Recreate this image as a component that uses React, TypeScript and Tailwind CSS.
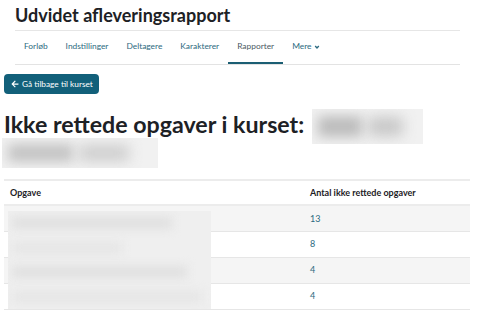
import React from 'react';

const navItems = ['Forløb', 'Indstillinger', 'Deltagere', 'Karakterer', 'Rapporter', 'Mere'];

const rows = [13, 8, 4, 4];

// blurred placeholder for the hidden course name
const Blur: React.FC<{ className: string; tone?: string }> = ({ className, tone = 'bg-[#bdbdbd]' }) => (
  <span className={`inline-flex items-center gap-[6px] overflow-hidden align-top px-[6px] bg-[#f1f1f1] ${className}`}>
    <span className={`h-[60%] w-[45%] ${tone} blur-[6px]`} />
    <span className={`h-[55%] w-[35%] ${tone} blur-[7px] opacity-80`} />
  </span>
);

const App: React.FC = () => {
  return (
    <div className="w-[480px] h-[328px] overflow-hidden bg-white text-[#1d2125]" style={{ fontFamily: 'Lato, "Open Sans", sans-serif' }}>
      <div className="px-[15px] pt-[2px]">
        <h1 className="text-[18px] font-bold leading-[26px]">Udvidet afleveringsrapport</h1>
        <div className="mt-[2px] h-px bg-[#e6e6e6] w-[445px]" />
        <nav className="flex h-[34px] items-stretch w-[445px] border-b border-[#e3e3e3]">
          {navItems.map((item) => {
            const active = item === 'Rapporter';
            return (
              <div
                key={item}
                className={`flex items-center px-[9px] text-[8.4px] border-b-2 ${
                  active ? 'border-[#1b5e73] text-[#4b5a63]' : 'border-transparent text-[#2c6a80]'
                }`}
              >
                {item}
                {item === 'Mere' && (
                  <svg className="ml-[2px] w-[6px] h-[6px]" viewBox="0 0 10 10" fill="none" stroke="currentColor" strokeWidth="2.4">
                    <path d="M2 3.5l3 3 3-3" />
                  </svg>
                )}
              </div>
            );
          })}
        </nav>
      </div>

      <div className="px-[4px]">
        <button className="mt-[9px] flex items-center gap-[3px] h-[20px] pl-[7px] pr-[6px] rounded-[4px] bg-[#12607a] text-white text-[8.3px]">
          <svg className="w-[8px] h-[8px]" viewBox="0 0 448 512" fill="currentColor">
            <path d="M257.5 445.1l-22.2 22.2c-9.4 9.4-24.6 9.4-33.9 0L7 273c-9.4-9.4-9.4-24.6 0-33.9L201.4 44.7c9.4-9.4 24.6-9.4 33.9 0l22.2 22.2c9.5 9.5 9.3 25-.4 34.3L136.6 216H424c13.3 0 24 10.7 24 24v32c0 13.3-10.7 24-24 24H136.6l120.5 114.8c9.8 9.3 10 24.8.4 34.3z" />
          </svg>
          Gå tilbage til kurset
        </button>

        <h2 className="mt-[16px] text-[23.2px] font-bold leading-[28px] whitespace-nowrap">
          Ikke rettede opgaver i kurset:{' '}
          <Blur className="w-[111px] h-[35px] -mt-[1px] -mb-[10px] ml-[2px]" />
        </h2>
        <Blur className="flex w-[156px] h-[30px] -ml-[2px]" tone="bg-[#c4c4c4]" />

        <div className="relative mt-[11px] w-[466px]">
          <table className="w-full border-collapse text-[9px]">
            <thead>
              <tr className="border-t-2 border-b-2 border-[#ececec]">
                <th className="h-[25px] px-[6px] text-left font-bold">Opgave</th>
                <th className="w-[162px] px-[2px] text-left font-bold">Antal ikke rettede opgaver</th>
              </tr>
            </thead>
            <tbody>
              {rows.map((n, i) => (
                <tr key={i} className={`border-b border-[#e6e6e6] ${i % 2 === 0 ? 'bg-[#f5f5f5]' : 'bg-white'}`}>
                  <td className="h-[26px] px-[6px]" />
                  <td className="px-[2px] text-[#2c6a80]">{n}</td>
                </tr>
              ))}
            </tbody>
          </table>
          {/* blurred assignment names lying over the first column */}
          <div className="absolute left-[4px] top-[32px] w-[203px] h-[98px] overflow-hidden bg-[#efefef] flex flex-col justify-around px-[4px]">
            <div className="w-[160px] h-[12px] bg-[#e0e0e0] blur-[5px]" />
            <div className="w-[110px] h-[12px] bg-[#e6e6e6] blur-[5px]" />
            <div className="w-[175px] h-[12px] bg-[#e0e0e0] blur-[5px]" />
            <div className="w-[190px] h-[12px] bg-[#e6e6e6] blur-[5px]" />
          </div>
        </div>
      </div>
    </div>
  );
};

export default App;
